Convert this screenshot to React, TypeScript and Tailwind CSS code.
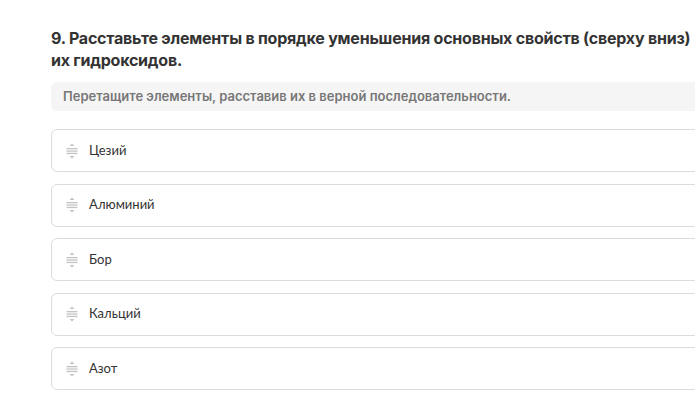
import React from "react";

function DragIcon() {
  return (
    <svg width="12" height="16" viewBox="0 0 12 16" className="shrink-0">
      <path d="M6 0.5 L8.5 3 L3.5 3 Z" fill="#c4c4c4" />
      <rect x="0.5" y="5" width="11" height="1.3" fill="#c4c4c4" />
      <rect x="0.5" y="7.4" width="11" height="1.3" fill="#c4c4c4" />
      <rect x="0.5" y="9.8" width="11" height="1.3" fill="#c4c4c4" />
      <path d="M6 15.5 L8.5 13 L3.5 13 Z" fill="#c4c4c4" />
    </svg>
  );
}

const items = ["Цезий", "Алюминий", "Бор", "Кальций", "Азот"];

export default function App() {
  return (
    <div className="w-[695px] h-[400px] overflow-hidden bg-white">
      <div className="w-[700px] pl-[51px] pt-[27px]">
        <h1
          className="w-[645px] text-[16px] leading-[22px] font-bold text-[#333333] tracking-[-0.22px]"
          style={{ fontFamily: "Inter, 'Noto Sans', sans-serif" }}
        >
          9. Расставьте элементы в порядке уменьшения основных свойств (сверху вниз) их гидроксидов.
        </h1>
        <div
          className="mt-[11px] h-[29px] rounded-[6px] bg-[#f5f5f5] pl-[12px] flex items-center text-[13px] font-semibold text-[#777777]"
          style={{ fontFamily: "Inter, 'Noto Sans', sans-serif" }}
        >
          Перетащите элементы, расставив их в верной последовательности.
        </div>
        <div className="mt-[18px] flex flex-col gap-[11.5px]">
          {items.map((t) => (
            <div
              key={t}
              className="h-[43px] rounded-[6px] border border-[#dcdcdc] flex items-center pl-[14px] gap-[11px] text-[13px] text-[#333333]"
              style={{ fontFamily: "Lato, 'Open Sans', sans-serif" }}
            >
              <DragIcon />
              <span>{t}</span>
            </div>
          ))}
        </div>
      </div>
    </div>
  );
}
